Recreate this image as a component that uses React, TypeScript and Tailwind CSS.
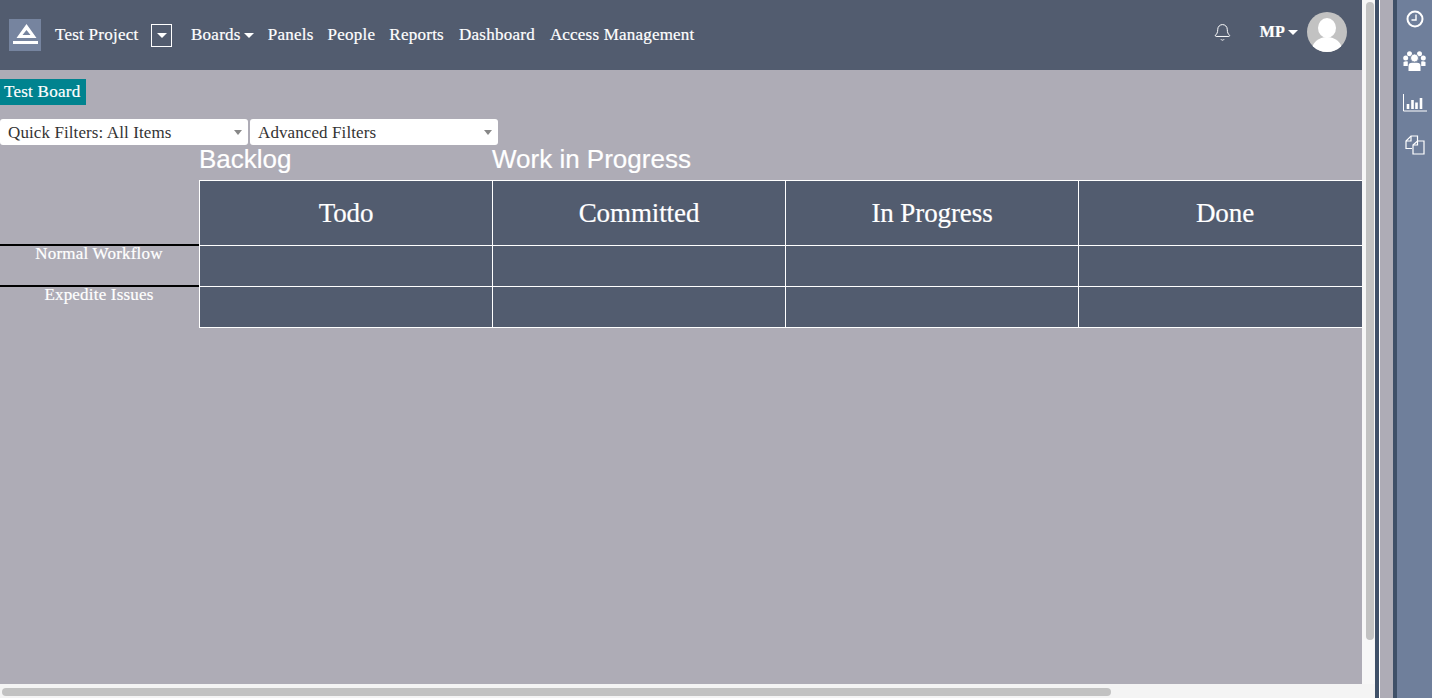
import React from "react";
import { Bell } from "lucide-react";

function Caret({ className = "" }: { className?: string }) {
  return <span className={`inline-block w-0 h-0 border-x-[5px] border-x-transparent border-t-[5px] border-t-white ${className}`} />;
}

function Select({ label, width }: { label: string; width: string }) {
  return (
    <div className={`${width} h-[26px] bg-white rounded-[3px] flex items-center justify-between pl-2 pr-[6px] text-[17px] text-[#333] font-['Liberation_Serif',serif] tracking-[0.1px]`}>
      <span className="pt-[1px]">{label}</span>
      <span className="w-0 h-0 border-x-[4px] border-x-transparent border-t-[5px] border-t-[#888]" />
    </div>
  );
}

function Cell({ children }: { children?: React.ReactNode }) {
  return (
    <div className="border-l border-b border-white flex items-center justify-center text-white text-[27px] tracking-[-0.1px] font-['Liberation_Serif',serif] [-webkit-text-stroke:0.2px_white]">
      {children}
    </div>
  );
}

export default function App() {
  const cols = ["Todo", "Committed", "In Progress", "Done"];
  return (
    <div className="w-[1432px] h-[698px] flex overflow-hidden bg-white">
      <div className="w-[1375px] flex flex-col shrink-0">
        <div className="flex h-[684px]">
          <main className="w-[1362px] bg-[#aeacb6] overflow-hidden flex flex-col">
            <header className="h-[70px] shrink-0 bg-[#525c6f] flex items-center text-white text-[17px] font-['Liberation_Serif',serif] tracking-[0.25px] [-webkit-text-stroke:0.2px_white]">
              <div className="ml-[9px] w-8 h-8 bg-[#76849f]">
                <svg width="32" height="32" viewBox="0 0 32 32">
                  <path fillRule="evenodd" d="M17.500 5 L27.500 19 H7.500 Z M17.500 11 L13.500 16 H21.500 Z" fill="#fff" />
                  <rect x="4" y="22" width="25" height="3" fill="#fff" />
                </svg>
              </div>
              <span className="ml-[14px] w-[85px] whitespace-nowrap">Test Project</span>
              <span className="ml-[11px] w-[21px] h-[23px] border border-white flex items-center justify-center"><Caret /></span>
              <span className="ml-[19px] flex items-center gap-[3px]">Boards<Caret /></span>
              <span className="ml-[14px]">Panels</span>
              <span className="ml-[14px]">People</span>
              <span className="ml-[14px]">Reports</span>
              <span className="ml-[15px]">Dashboard</span>
              <span className="ml-[15px] tracking-[0.2px]">Access Management</span>
              <Bell size={19} strokeWidth={1.25} className="ml-auto -mt-[6px]" />
              <span className="ml-[28px] -mt-[6px] flex items-center gap-[3px] text-[16px] font-bold">MP<Caret /></span>
              <div className="ml-[9px] mr-[15px] -mt-[6px] w-10 h-10 rounded-full bg-[#c2c2c2] overflow-hidden">
                <svg width="40" height="40" viewBox="0 0 40 40">
                  <ellipse cx="20" cy="16" rx="9" ry="10" fill="#fff" />
                  <ellipse cx="20" cy="38" rx="15" ry="13" fill="#fff" />
                </svg>
              </div>
            </header>
            <div className="mt-[9px] w-[86px] h-[26px] bg-[#00838f] text-white text-[17px] font-['Liberation_Serif',serif] flex items-center pl-1 tracking-[0.25px] whitespace-nowrap [-webkit-text-stroke:0.2px_white]">Test Board</div>
            <div className="mt-[14px] flex gap-[2px]">
              <Select label="Quick Filters: All Items" width="w-[248px]" />
              <Select label="Advanced Filters" width="w-[248px]" />
            </div>
            <div className="ml-[199px] h-[35px] flex text-white text-[26px] font-['Liberation_Sans',sans-serif] leading-[28px] [-webkit-text-stroke:0.2px_white]">
              <span className="w-[293px]">Backlog</span>
              <span>Work in Progress</span>
            </div>
            <div className="flex">
              <div className="w-[199px] shrink-0 text-white text-[17px] font-['Liberation_Serif',serif] text-center tracking-[0.2px] [-webkit-text-stroke:0.2px_white]">
                <div className="h-[66px] border-b-2 border-black w-[200px]" />
                <div className="h-[41px] border-b-2 border-black w-[200px] pr-[2px] leading-[15px]">Normal Workflow</div>
                <div className="h-[41px] w-[200px] pr-[2px] leading-[15px]">Expedite Issues</div>
              </div>
              <div className="w-[1172px] shrink-0 grid grid-cols-[293px_293px_293px_293px] grid-rows-[65px_41px_41px] border-t border-white bg-[#525c6f]">
                {cols.map((c) => <Cell key={c}>{c}</Cell>)}
                {cols.map((c) => <Cell key={c + "1"} />)}
                {cols.map((c) => <Cell key={c + "2"} />)}
              </div>
            </div>
          </main>
          <div className="w-[13px] bg-[#f7f7f7] pt-[2px] pl-[4px]">
            <div className="w-[8px] h-[638px] rounded-full bg-[#c2c2c2]" />
          </div>
        </div>
        <div className="h-[14px] bg-[#f4f4f4] pt-[4px] pl-[2px]">
          <div className="w-[1109px] h-[8px] rounded-full bg-[#c2c2c2]" />
        </div>
      </div>
      <div className="w-[4px] bg-[#3f5068]" />
      <div className="w-[1px] bg-white" />
      <div className="w-[13px] bg-[#aeacb6]" />
      <div className="w-[4px] bg-[#3f5068]" />
      <aside className="w-[35px] bg-[#6f7f9b] flex flex-col items-center text-white">
        <svg className="mt-[10px]" width="18" height="18" viewBox="0 0 18 18" fill="none" stroke="#fff">
          <circle cx="9" cy="9" r="7.5" strokeWidth="2" />
          <path d="M10 4.500 V10 H5.500" strokeWidth="1.4" />
        </svg>
        <svg className="mt-[23px]" width="23" height="20" viewBox="0 0 23 20" fill="#fff">
          <circle cx="6.500" cy="2.800" r="2.500" />
          <circle cx="16.500" cy="2.800" r="2.500" />
          <circle cx="2.700" cy="7" r="2.500" />
          <circle cx="20.300" cy="7" r="2.500" />
          <circle cx="11.500" cy="7" r="4" stroke="#6f7f9b" strokeWidth="0.8" />
          <path d="M0.500 11 Q2.500 9.800 4.800 10.500 L4.800 15 H0.500 Z" />
          <path d="M22.500 11 Q20.500 9.800 18.200 10.500 L18.200 15 H22.500 Z" />
          <path d="M5.500 20 V15 Q5.500 11.700 9 11.700 H14 Q17.500 11.700 17.500 15 V20 Z" />
        </svg>
        <svg className="mt-[23px]" width="24" height="18" viewBox="0 0 24 18" fill="none" stroke="#fff">
          <path d="M0.500 0 V17 H24" strokeWidth="1" />
          <path d="M5 15 V10 M9.500 15 V6 M13.500 15 V8.500 M18 15 V4" strokeWidth="2.600" />
        </svg>
        <svg className="mt-[23px]" width="20" height="20" viewBox="0 0 20 20" fill="none" stroke="#fff" strokeWidth="1.2">
          <path d="M7 13.500 H1 V6 L6 1 H12.500 V6" />
          <path d="M1 6 H6 V1" />
          <path d="M8 10 L12.500 6 H19 V19 H8 Z" />
          <path d="M8 10 H12.500 V6" />
        </svg>
      </aside>
    </div>
  );
}
